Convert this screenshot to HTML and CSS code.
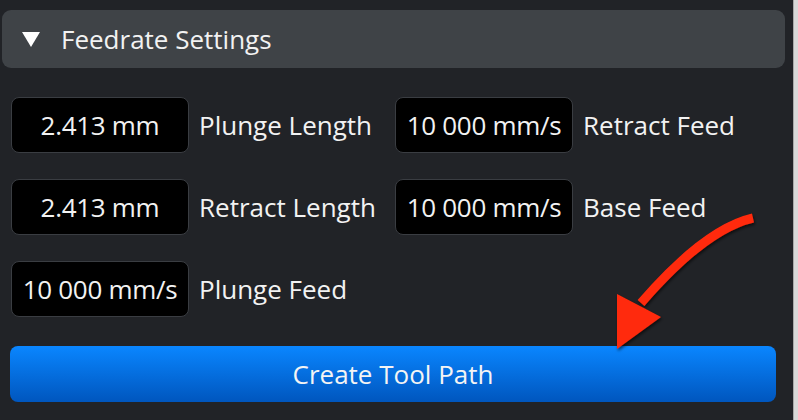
FILE: index.html
```html
<!DOCTYPE html>
<html>
<head>
<meta charset="utf-8">
<link rel="stylesheet" href="styles.css">
</head>
<body>
<div class="app">
  <div class="panel">
    <div class="header">
      <span class="caret"></span>
      <span class="title">Feedrate Settings</span>
    </div>
    <div class="grid">
      <div class="field"><div class="box">2.413 mm</div><span class="label">Plunge Length</span></div>
      <div class="field"><div class="box">10 000 mm/s</div><span class="label">Retract Feed</span></div>
      <div class="field"><div class="box">2.413 mm</div><span class="label">Retract Length</span></div>
      <div class="field"><div class="box">10 000 mm/s</div><span class="label">Base Feed</span></div>
      <div class="field"><div class="box">10 000 mm/s</div><span class="label">Plunge Feed</span></div>
    </div>
    <button class="create">Create Tool Path</button>
  </div>
  <div class="scrollbar"></div>
  <svg class="arrow" width="798" height="420" viewBox="0 0 798 420">
    <defs>
      <filter id="sh" x="-20%" y="-20%" width="140%" height="140%">
        <feDropShadow dx="1" dy="2" stdDeviation="1.5" flood-color="#000" flood-opacity="0.6"/>
      </filter>
    </defs>
    <g filter="url(#sh)" fill="#ff2a0a" stroke="none">
      <path d="M753 218 Q705 229 641 303" fill="none" stroke="#ff2a0a" stroke-width="9"/>
      <polygon points="617,294 661,317 617,349"/>
    </g>
  </svg>
</div>
</body>
</html>
```

FILE: styles.css
```css
* { box-sizing: border-box; }
html, body {
  margin: 0;
  padding: 0;
  background: #212327;
  width: 798px;
  height: 420px;
  overflow: hidden;
}
.app {
  position: relative;
  display: flex;
  width: 798px;
  height: 420px;
  font-family: "Open Sans", "Liberation Sans", sans-serif;
  color: #f2f2f2;
}
.panel {
  flex: 1;
  padding: 10px 8px 0 2px;
}
.header {
  height: 58px;
  background: #3f4347;
  border-radius: 9px;
  display: flex;
  align-items: center;
  padding-left: 20px;
}
.caret {
  width: 0;
  height: 0;
  border-left: 9px solid transparent;
  border-right: 9px solid transparent;
  border-top: 15px solid #ffffff;
  margin-right: 21px;
  margin-top: 1px;
}
.title {
  font-size: 26px;
  line-height: 1;
}
.grid {
  display: grid;
  grid-template-columns: 384px 384px;
  row-gap: 26px;
  margin-top: 29px;
  padding-left: 9px;
}
.field {
  display: flex;
  align-items: center;
  gap: 10px;
}
.box {
  width: 178px;
  height: 56px;
  background: #000;
  border: 1px solid #3a3d42;
  border-radius: 8px;
  display: flex;
  align-items: center;
  justify-content: center;
  font-size: 26px;
  line-height: 1;
  letter-spacing: -0.3px;
}
.label {
  font-size: 26px;
  line-height: 1;
}
.create {
  display: block;
  margin: 29px 0 0 8px;
  width: 766px;
  height: 56px;
  border: none;
  border-radius: 8px;
  background: linear-gradient(#0a86ff, #0056be);
  color: #f4f4f4;
  font-family: "Open Sans", "Liberation Sans", sans-serif;
  font-size: 26px;
  line-height: 1;
  padding: 0;
}
.scrollbar {
  width: 5px;
  background: #d8d8d8;
  border-left: 1px solid #a8a8a8;
}
.arrow {
  position: absolute;
  left: 0;
  top: 0;
  pointer-events: none;
}
```
